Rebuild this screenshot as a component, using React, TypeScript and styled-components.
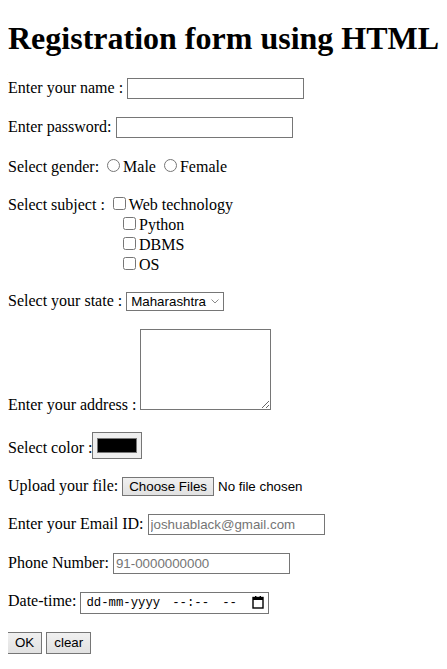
import styled, { createGlobalStyle } from 'styled-components';

const GlobalStyle = createGlobalStyle`
  html {
    overflow: hidden;
  }
  body {
    margin: 8px;
    background: #ffffff;
    color: #000000;
    font-family: "Liberation Serif", "Times New Roman", serif;
    font-size: 16px;
  }
`;

const Title = styled.h1`
  font-size: 32px;
  font-weight: bold;
  margin: 11.5px 0 21.44px;
  white-space: nowrap;
`;

const Row = styled.p`
  margin: 18px 0;
`;

const controlFont = `
  font-family: "Liberation Sans", Arial, sans-serif;
  font-size: 13.333px;
`;

const TextBox = styled.input<{ $width?: number }>`
  ${controlFont}
  box-sizing: border-box;
  width: ${(p) => p.$width ?? 177}px;
  height: 21px;
  padding: 1px 2px;
  border: 1px solid #767676;
  border-radius: 0;
  &::placeholder {
    color: #757575;
  }
`;

const Choice = styled.input`
  width: 13px;
  height: 13px;
  margin: 3px 3px 3px 4px;
  vertical-align: baseline;
`;

const Indent = styled.span`
  display: inline-block;
  width: 111px;
`;

const SelectWrap = styled.span`
  position: relative;
  display: inline-block;
`;

const StateSelect = styled.select`
  ${controlFont}
  appearance: none;
  box-sizing: border-box;
  width: 98px;
  height: 19px;
  padding: 0 16px 0 4px;
  border: 1px solid #767676;
  border-radius: 0;
  background: #ffffff;
  color: #000000;
`;

const Chevron = styled.svg`
  position: absolute;
  right: 5px;
  top: 7px;
  width: 8px;
  height: 5px;
  pointer-events: none;
`;

const Address = styled.textarea`
  box-sizing: border-box;
  width: 131px;
  height: 81px;
  border: 1px solid #767676;
  border-radius: 0;
  vertical-align: baseline;
`;

const ColorPick = styled.input`
  width: 50px;
  height: 27px;
  padding: 1px 2px;
  margin: 0;
  border: 1px solid #767676;
  background: #efefef;
`;

const FileInput = styled.input`
  ${controlFont}
  &::file-selector-button {
    ${controlFont}
    padding: 1px 6px;
    margin-right: 4px;
    border: 1px solid #767676;
    border-radius: 0;
    background: linear-gradient(#f0f0f0, #e1e1e1);
    color: #000000;
  }
`;

const DateBox = styled.span`
  display: inline-flex;
  align-items: center;
  box-sizing: border-box;
  width: 189px;
  height: 22px;
  padding: 0 4px 0 5px;
  border: 1px solid #767676;
  vertical-align: baseline;
  font-family: "Liberation Mono", "Courier New", monospace;
  font-size: 12.3px;
  color: #000000;
`;

const DatePart = styled.span<{ $gap?: number }>`
  margin-left: ${(p) => p.$gap ?? 0}px;
  white-space: pre;
`;

const CalendarIcon = styled.svg`
  margin-left: auto;
  width: 12px;
  height: 13px;
`;

const ButtonBar = styled.p`
  margin: 18px 0 18px -1px;
`;

const Button = styled.button`
  ${controlFont}
  padding: 1px 7px;
  margin: 0 4px 0 0;
  border: 1px solid #767676;
  border-radius: 0;
  background: linear-gradient(#f0f0f0, #e1e1e1);
  color: #000000;
  height: 22px;
`;

export default function App() {
  return (
    <>
      <GlobalStyle />
      <Title>Registration form using HTML</Title>
      <form onSubmit={(e) => e.preventDefault()}>
        <Row>
          Enter your name : <TextBox type="text" />
        </Row>
        <Row>
          Enter password: <TextBox type="password" />
        </Row>
        <Row>
          Select gender: <Choice type="radio" name="gender" />Male <Choice type="radio" name="gender" />Female
        </Row>
        <Row>
          Select subject : <Choice type="checkbox" />Web technology
          <br />
          <Indent />
          <Choice type="checkbox" />Python
          <br />
          <Indent />
          <Choice type="checkbox" />DBMS
          <br />
          <Indent />
          <Choice type="checkbox" />OS
        </Row>
        <Row>
          Select your state :{' '}
          <SelectWrap>
            <StateSelect defaultValue="Maharashtra">
              <option>Maharashtra</option>
              <option>Gujarat</option>
              <option>Karnataka</option>
            </StateSelect>
            <Chevron viewBox="0 0 8 5">
              <path d="M0.5 0.5 L4 4 L7.5 0.5" fill="none" stroke="#8a8a8a" strokeWidth="1" />
            </Chevron>
          </SelectWrap>
        </Row>
        <Row>
          Enter your address : <Address />
        </Row>
        <Row>
          Select color :<ColorPick type="color" defaultValue="#000000" />
        </Row>
        <Row>
          Upload your file: <FileInput type="file" multiple />
        </Row>
        <Row>
          Enter your Email ID: <TextBox type="email" placeholder="joshuablack@gmail.com" />
        </Row>
        <Row>
          Phone Number: <TextBox type="tel" placeholder="91-0000000000" />
        </Row>
        <Row>
          Date-time:{' '}
          <DateBox>
            <DatePart>dd-mm-yyyy</DatePart>
            <DatePart $gap={12}>--:--</DatePart>
            <DatePart $gap={13}>--</DatePart>
            <CalendarIcon viewBox="0 0 12 13">
              <rect x="1" y="1.5" width="10" height="10.5" fill="none" stroke="#000" strokeWidth="1.4" />
              <rect x="1" y="1.5" width="10" height="2.5" fill="#000" />
              <rect x="3" y="0" width="1.4" height="2" fill="#000" />
              <rect x="7.6" y="0" width="1.4" height="2" fill="#000" />
            </CalendarIcon>
          </DateBox>
        </Row>
        <ButtonBar>
          <Button type="submit">OK</Button>
          <Button type="reset">clear</Button>
        </ButtonBar>
      </form>
    </>
  );
}
